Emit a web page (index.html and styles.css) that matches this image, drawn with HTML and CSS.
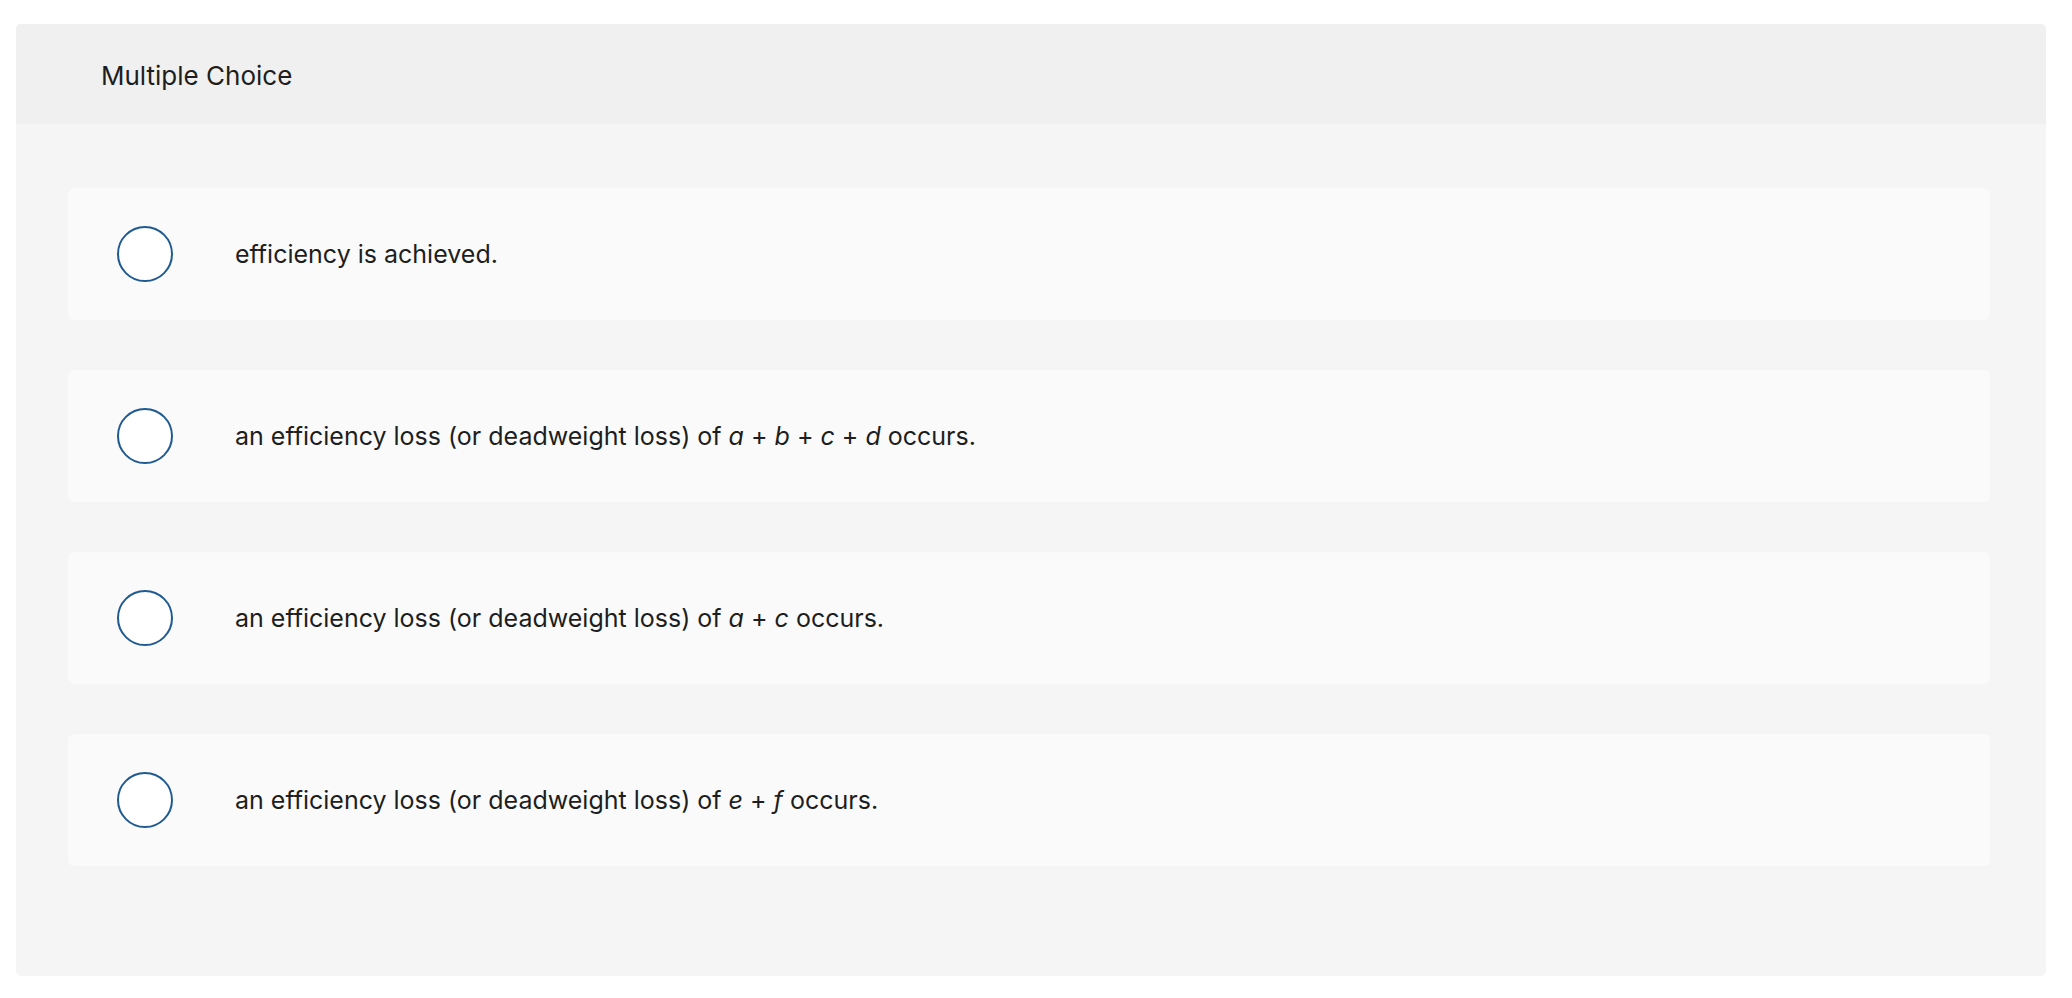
FILE: index.html
```html
<!DOCTYPE html>
<html lang="en">
<head>
<meta charset="utf-8">
<title>Multiple Choice</title>
<link rel="stylesheet" href="styles.css">
</head>
<body>
<div class="question">
  <div class="question-header">Multiple Choice</div>
  <div class="question-body">
    <label class="option"><span class="radio"></span><span class="option-text">efficiency is achieved.</span></label>
    <label class="option"><span class="radio"></span><span class="option-text">an efficiency loss (or deadweight loss) of <i>a</i> + <i>b</i> + <i>c</i> + <i>d</i> occurs.</span></label>
    <label class="option"><span class="radio"></span><span class="option-text">an efficiency loss (or deadweight loss) of <i>a</i> + <i>c</i> occurs.</span></label>
    <label class="option"><span class="radio"></span><span class="option-text">an efficiency loss (or deadweight loss) of <i>e</i> + <i>f</i> occurs.</span></label>
  </div>
</div>
</body>
</html>
```
FILE: styles.css
```css
html, body {
  margin: 0;
  padding: 0;
  background: #ffffff;
}
body {
  font-family: "Inter", "Liberation Sans", Arial, sans-serif;
  color: #1e1e1e;
}
.question {
  margin: 24px 26px 0 16px;
  background: #f5f5f5;
  border-radius: 5px;
  overflow: hidden;
}
.question-header {
  height: 100px;
  display: flex;
  align-items: center;
  padding-left: 85px;
  padding-top: 2px;
  box-sizing: border-box;
  background: #f0f0f0;
  font-size: 26px;
  color: #1e1e1e;
}
.question-body {
  display: flex;
  flex-direction: column;
  gap: 50px;
  padding: 64px 56px 110px 52px;
}
.option {
  height: 132px;
  display: flex;
  align-items: center;
  background: #fafafa;
  border-radius: 6px;
  padding-left: 49px;
  box-sizing: border-box;
}
.radio {
  width: 56px;
  height: 56px;
  box-sizing: border-box;
  border: 2px solid #1f5a91;
  border-radius: 50%;
  background: #ffffff;
  flex: none;
}
.option-text {
  margin-left: 62px;
  font-size: 25px;
  color: #1e1e1e;
}
.option-text i {
  font-style: italic;
}
```
